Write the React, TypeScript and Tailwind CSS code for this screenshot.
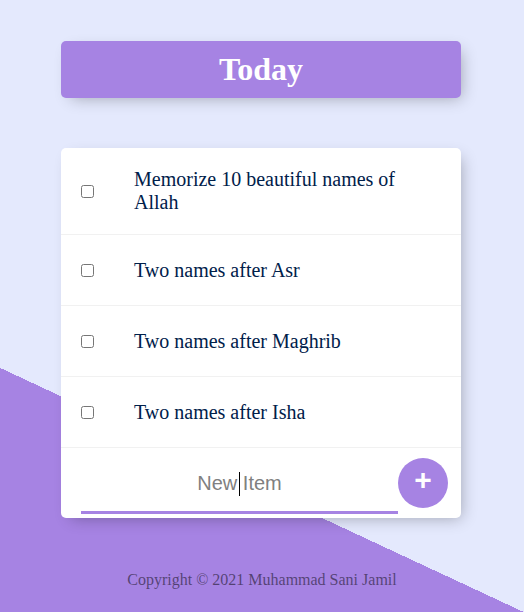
import { useState } from "react";

const initialItems = [
  "Memorize 10 beautiful names of Allah",
  "Two names after Asr",
  "Two names after Maghrib",
  "Two names after Isha",
];

export default function App() {
  const [items] = useState(initialItems);

  return (
    <div className="min-h-screen bg-[#E4E9FD] bg-[linear-gradient(25deg,#A683E3_50%,#E4E9FD_50%)] bg-[length:100%_980px] bg-no-repeat pt-[41px] font-['Liberation_Serif',serif]">
      {/* Heading */}
      <div className="mx-auto w-[400px] -translate-x-px rounded-[5px] bg-[#A683E3] shadow-[5px_5px_15px_-5px_rgba(0,0,0,0.3)] text-center">
        <h1 className="p-[10px] text-[32px] font-bold leading-[37px] text-white">Today</h1>
      </div>

      {/* List */}
      <div className="mx-auto mt-[50px] w-[400px] -translate-x-px rounded-[5px] bg-white shadow-[5px_5px_15px_-5px_rgba(0,0,0,0.3)]">
        {items.map((item) => (
          <div key={item} className="flex min-h-[71px] items-center border-b border-[#F1F1F1]">
            <input type="checkbox" className="m-5 h-[13px] w-[13px] shrink-0" />
            <p className="p-5 text-[20px] font-normal leading-[23px] text-[#00204a]">{item}</p>
          </div>
        ))}

        <form className="ml-5 flex min-h-[70px] items-center" onSubmit={(e) => e.preventDefault()}>
          <div className="relative">
            <input
              type="text"
              placeholder="New Item"
              className="h-[62px] w-[317px] bg-transparent px-[2px] text-center font-['Liberation_Sans',sans-serif] text-[20px] font-normal shadow-[inset_0_-3px_0_0_#A683E3] outline-none placeholder:text-[grey]"
            />
            <span className="pointer-events-none absolute left-[158px] top-[20px] h-[24px] w-px bg-black"></span>
          </div>
          <button
            type="submit"
            className="h-[50px] w-[50px] rounded-full bg-[#A683E3] pb-[6px] font-['Liberation_Sans',sans-serif] text-[30px] font-bold leading-[34px] text-white"
          >
            +
          </button>
        </form>
      </div>

      <footer className="mt-[50px] text-center text-[16px] text-black/50">
        Copyright © 2021 Muhammad Sani Jamil
      </footer>
    </div>
  );
}
